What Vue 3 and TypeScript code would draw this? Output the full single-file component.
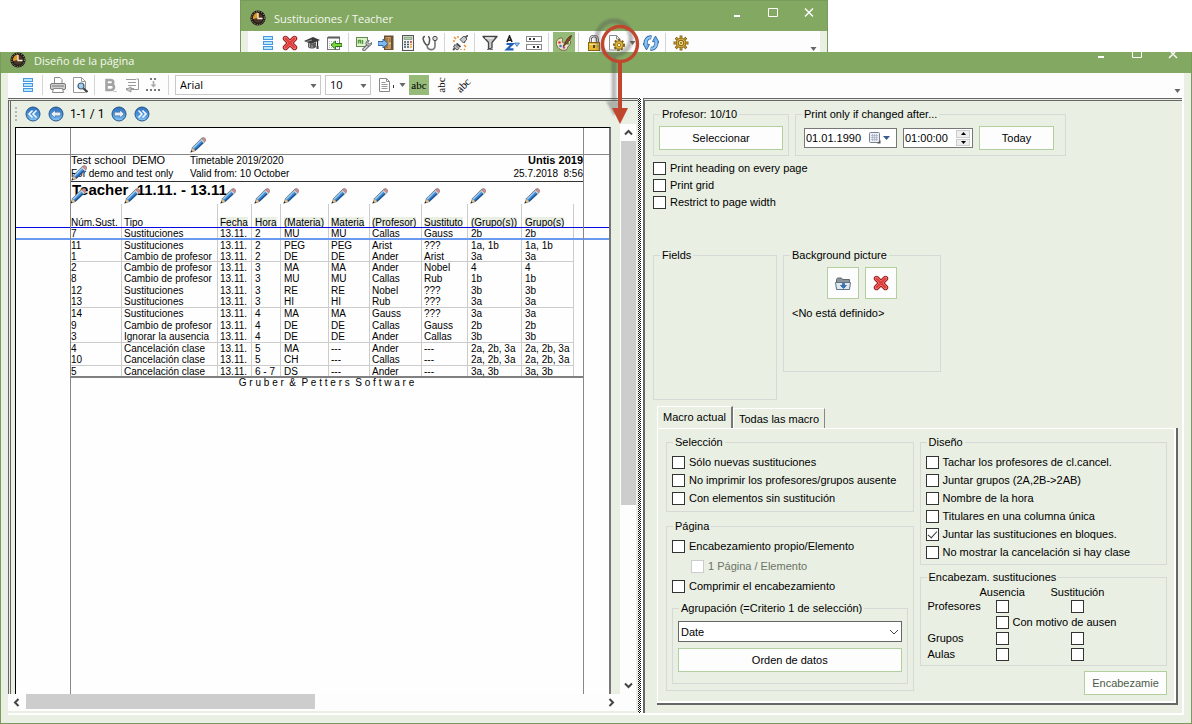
<script setup lang="ts">
import { ref } from 'vue'

interface Tool {
  icon: string
  label: string
  active?: boolean
  menu?: boolean
}

const mainTools: Tool[][] = [
  [
    { icon: 'list', label: 'Lista' },
    { icon: 'cross', label: 'Eliminar' },
    { icon: 'cap', label: 'Profesores' },
    { icon: 'note', label: 'Importar' },
  ],
  [
    { icon: 'chart', label: 'Herramientas' },
    { icon: 'door', label: 'Ausencia' },
    { icon: 'calc', label: 'Contador' },
    { icon: 'steth', label: 'Diagnosis' },
  ],
  [{ icon: 'plug', label: 'Desconectar' }],
  [
    { icon: 'funnel', label: 'Filtro' },
    { icon: 'sort', label: 'Ordenar' },
    { icon: 'boxes', label: 'Columnas' },
  ],
  [{ icon: 'palette', label: 'Colores', active: true }],
  [
    { icon: 'lock', label: 'Bloquear' },
    { icon: 'pagegear', label: 'Vista', menu: true },
    { icon: 'refresh', label: 'Actualizar' },
  ],
  [{ icon: 'gear', label: 'Ajustes' }],
]

const designTools: Tool[][] = [
  [{ icon: 'list', label: 'Lista' }],
  [
    { icon: 'printer', label: 'Imprimir' },
    { icon: 'preview', label: 'Vista previa' },
  ],
  [
    { icon: 'bold', label: 'Negrita' },
    { icon: 'wrap', label: 'Ajustar' },
    { icon: 'spacing', label: 'Separación' },
  ],
]

const columns = [
  { title: 'Núm.Sust.', cls: 'c-num' },
  { title: 'Tipo', cls: 'c-type' },
  { title: 'Fecha', cls: 'c-date' },
  { title: 'Hora', cls: 'c-hour' },
  { title: '(Materia)', cls: 'c-subj' },
  { title: 'Materia', cls: 'c-subj2' },
  { title: '(Profesor)', cls: 'c-teach' },
  { title: 'Sustituto', cls: 'c-subst' },
  { title: '(Grupo(s))', cls: 'c-class' },
  { title: 'Grupo(s)', cls: 'c-class2' },
]

const groups: string[][][] = [
  [['7', 'Sustituciones', '13.11.', '2', 'MU', 'MU', 'Callas', 'Gauss', '2b', '2b']],
  [
    ['11', 'Sustituciones', '13.11.', '2', 'PEG', 'PEG', 'Arist', '???', '1a, 1b', '1a, 1b'],
    ['1', 'Cambio de profesor', '13.11.', '2', 'DE', 'DE', 'Ander', 'Arist', '3a', '3a'],
  ],
  [
    ['2', 'Cambio de profesor', '13.11.', '3', 'MA', 'MA', 'Ander', 'Nobel', '4', '4'],
    ['8', 'Cambio de profesor', '13.11.', '3', 'MU', 'MU', 'Callas', 'Rub', '1b', '1b'],
    ['12', 'Sustituciones', '13.11.', '3', 'RE', 'RE', 'Nobel', '???', '3b', '3b'],
    ['13', 'Sustituciones', '13.11.', '3', 'HI', 'HI', 'Rub', '???', '3a', '3a'],
  ],
  [
    ['14', 'Sustituciones', '13.11.', '4', 'MA', 'MA', 'Gauss', '???', '3a', '3a'],
    ['9', 'Cambio de profesor', '13.11.', '4', 'DE', 'DE', 'Callas', 'Gauss', '2b', '2b'],
    ['3', 'Ignorar la ausencia', '13.11.', '4', 'DE', 'DE', 'Ander', 'Callas', '3b', '3b'],
  ],
  [
    ['4', 'Cancelación clase', '13.11.', '5', 'MA', '---', 'Ander', '---', '2a, 2b, 3a', '2a, 2b, 3a'],
    ['10', 'Cancelación clase', '13.11.', '5', 'CH', '---', 'Callas', '---', '2a, 2b, 3a', '2a, 2b, 3a'],
  ],
  [['5', 'Cancelación clase', '13.11.', '6 - 7', 'DS', '---', 'Ander', '---', '3a, 3b', '3a, 3b']],
]
const tallRows = new Set(['7', '8', '13', '14', '3', '10'])

const printOptions = ref([
  { label: 'Print heading on every page', on: false },
  { label: 'Print grid', on: false },
  { label: 'Restrict to page width', on: false },
])
const selection = ref([
  { label: 'Sólo nuevas sustituciones', on: false },
  { label: 'No imprimir los profesores/grupos ausente', on: false },
  { label: 'Con elementos sin sustitución', on: false },
])
const design = ref([
  { label: 'Tachar los profesores de cl.cancel.', on: false },
  { label: 'Juntar grupos (2A,2B->2AB)', on: false },
  { label: 'Nombre de la hora', on: false },
  { label: 'Titulares en una columna única', on: false },
  { label: 'Juntar las sustituciones en bloques.', on: true },
  { label: 'No mostrar la cancelación si hay clase', on: false },
])
const ownHeading = ref(false)
const onePage = ref(false)
const compress = ref(false)
const startDate = ref('01.01.1990')
const startTime = ref('01:00:00')
const font = ref('Arial')
const fontSize = ref('10')
const grouping = ref('Date')
const publisher = 'G r u b e r  &  P e t t e r s  S o f t w a r e'
</script>

<template>
  <div class="desktop">
    <svg class="defs" aria-hidden="true">
      <defs>
        <linearGradient id="ball" x1="0" y1="0" x2="0" y2="1">
          <stop offset="0" stop-color="#2f6fbd" />
          <stop offset="0.6" stop-color="#4f9be0" />
          <stop offset="1" stop-color="#8ec8f5" />
        </linearGradient>
      </defs>
      <symbol id="i-clock" viewBox="0 0 16 16">
        <circle cx="8" cy="8" r="7.6" fill="#1f1a16" />
        <circle cx="8" cy="8" r="6.4" fill="none" stroke="#b9a894" stroke-width="1" stroke-dasharray="1 1.5" />
        <circle cx="8" cy="8" r="4.8" fill="#4a3626" />
        <path d="M8 8V2.6A5.4 5.4 0 0 0 3 9z" fill="#e09a2c" />
        <path d="M8 3v5.5h4.5" fill="none" stroke="#fff2dc" stroke-width="1.3" />
      </symbol>
      <symbol id="i-list" viewBox="0 0 16 16">
        <g fill="#b5e8fb" stroke="#4a97e0">
          <rect x="3.500" y="1.500" width="9" height="3" />
          <rect x="3.500" y="6.500" width="9" height="3" />
          <rect x="3.500" y="11.500" width="9" height="3" />
        </g>
      </symbol>
      <symbol id="i-cross" viewBox="0 0 16 16">
        <path d="M3.500 3.500l9 9M12.500 3.500l-9 9" stroke="#8e1a1c" stroke-width="5.400" stroke-linecap="round" />
        <path d="M3.500 3.500l9 9M12.500 3.500l-9 9" stroke="#f08078" stroke-width="3.600" stroke-linecap="round" />
        <path d="M3.700 3.700l8.600 8.600M12.300 3.700l-8.600 8.600" stroke="#e23b3b" stroke-width="2.200" stroke-linecap="round" />
      </symbol>
      <symbol id="i-cap" viewBox="0 0 16 16">
        <path d="M0 6l9-4 7 3-9 4z" fill="#3a3a3a" />
        <path d="M4 8v4c2 2 6 2 8 0V7L7 9z" fill="#5c5c5c" />
        <path d="M5.500 9v3M8 10v3" stroke="#aaa" />
        <path d="M2.500 6.500L8 5" stroke="#999" />
        <path d="M13.500 6v7" stroke="#222" stroke-width="1.200" />
        <path d="M12.500 11h2v3h-2z" fill="#444" />
      </symbol>
      <symbol id="i-note" viewBox="0 0 16 16">
        <rect x="1.500" y="2.500" width="12" height="12" fill="#fafafa" stroke="#777" />
        <path d="M3 1v3M5 1v3M7 1v3M9 1v3M11 1v3M13 1v3" stroke="#444" stroke-width="0.900" />
        <path d="M3 6.500h9M3 8.500h3M3 10.500h2M3 12.500h9" stroke="#bbb" stroke-dasharray="1 1" />
        <path d="M5 10l4.500-4v2.500H16v3H9.500V14z" fill="#7ed63c" stroke="#1c6a12" stroke-width="0.900" />
      </symbol>
      <symbol id="i-chart" viewBox="0 0 16 16">
        <rect x="0.500" y="2.500" width="11" height="9" fill="#dff0cc" stroke="#5f8c4c" />
        <path d="M2.500 8.500v-3h2v3M6.500 9V5" fill="none" stroke="#4f9a3a" stroke-width="1.400" />
        <path d="M8 14.500l4.200-4.200" stroke="#555" stroke-width="3.400" stroke-linecap="round" />
        <path d="M8 14.500l4.200-4.200" stroke="#c9ccd0" stroke-width="1.800" stroke-linecap="round" />
        <path d="M15.500 7.500l-2 1.500-1.500-1.500L13.200 5.500c-2-.5-4 1.500-3 3.800s4 2.200 5.200.2z" fill="#b6babf" stroke="#555" stroke-width="0.800" />
      </symbol>
      <symbol id="i-door" viewBox="0 0 16 16">
        <rect x="6" y="0.500" width="9.500" height="14.500" fill="#6b5134" />
        <path d="M7.500 2h5.500v12H7.500z" fill="#c79b62" />
        <path d="M8 3h2v4H8zM11 3h1.500v4H11zM8 9h2v4H8z" fill="#a5784a" />
        <circle cx="12" cy="8.500" r="0.800" fill="#ffe06b" />
        <path d="M0 6.500h5V4l5 4.500-5 4.500v-2.500H0z" fill="#7db9ee" stroke="#2b5f9a" stroke-width="0.900" />
      </symbol>
      <symbol id="i-calc" viewBox="0 0 16 16">
        <rect x="2.500" y="0.500" width="11" height="15" fill="#f4f4f4" stroke="#555" />
        <rect x="4" y="2" width="8" height="2.500" fill="#a9d69b" stroke="#667" stroke-width="0.500" />
        <path d="M4 7h2M4 9.500h2M4 12h2M7 7h2M7 9.500h2M7 12h2" stroke="#456" stroke-width="1.300" />
        <path d="M10 7h2" stroke="#c33" stroke-width="1.300" />
        <path d="M10 9.500h2M10 12h2" stroke="#e3a52b" stroke-width="1.300" />
      </symbol>
      <symbol id="i-steth" viewBox="0 0 16 16">
        <path d="M3 1.500C0 1.500 1 6 3.500 9c1 1.500 3 1.500 3.500-.5C8 5 8 2 6 1.500" fill="none" stroke="#555" stroke-width="1.500" />
        <path d="M5 10c0 6 8 6 8 1V5" fill="none" stroke="#777" stroke-width="1.600" />
        <circle cx="13" cy="3.500" r="2.200" fill="#ddd" stroke="#444" />
      </symbol>
      <symbol id="i-plug" viewBox="0 0 16 16">
        <path d="M1 15l3-3" stroke="#555" stroke-width="1.800" />
        <path d="M3 9.500l4 4-2 1.500-3.500-3z" fill="#bbb" stroke="#555" />
        <path d="M4.500 8.500l4 3.500M9 4l4 3.500" stroke="#444" stroke-width="1.800" />
        <path d="M8 4.500L12 1l3 3-3.500 4z" fill="#c9c9c9" stroke="#555" />
        <path d="M13.500 2.500L16 0" stroke="#555" stroke-width="1.800" />
        <path d="M2 2l2 2M6 1v2M1 6h2M14 12l-2-2M13 15l-1-1M9 14v1" stroke="#f08a24" stroke-width="1.400" />
      </symbol>
      <symbol id="i-funnel" viewBox="0 0 16 16">
        <path d="M1 1.500h14L10 7.500V13l-3.500 1V7.500z" fill="#c7c9cb" stroke="#444" stroke-width="1.300" stroke-linejoin="round" />
        <path d="M3 3h9" stroke="#fff" />
        <path d="M5 14.500h6" stroke="#777" />
      </symbol>
      <symbol id="i-sort" viewBox="0 0 16 16">
        <path d="M3 7L5.500 1 8 7M4 5.200h3" fill="none" stroke="#222" stroke-width="1.600" />
        <path d="M2.500 9h6L3 14.300H9.500" fill="none" stroke="#1f5fb8" stroke-width="2.200" />
        <path d="M10.500 8h5L13 11.500z" fill="#8fc3f0" stroke="#3a77b8" stroke-width="0.800" />
      </symbol>
      <symbol id="i-boxes" viewBox="0 0 16 16">
        <g fill="#fff" stroke="#888">
          <rect x="0.500" y="1.500" width="15" height="5" />
          <rect x="0.500" y="9.500" width="15" height="5" />
        </g>
        <path d="M3 3l2 2M5 3l-2 2M7 3l2 2M9 3l-2 2M11 11l2 2M13 11l-2 2M7 11l2 2M9 11l-2 2" stroke="#222" stroke-width="0.900" />
      </symbol>
      <symbol id="i-palette" viewBox="0 0 16 16">
        <path d="M5 3C2 3-1 7 1 11s6 5 9 4c2-.8 1-2.500 2-3.500S15 10 14.500 7 12 5 11 6 7 9 6.500 7 8 3 5 3z" fill="#efe3c4" stroke="#6b5a3a" stroke-width="0.900" />
        <circle cx="3.500" cy="7.500" r="1.300" fill="#d03c3c" />
        <circle cx="12" cy="8.500" r="1.200" fill="#4c9a4c" />
        <circle cx="4.500" cy="11" r="1.300" fill="#3f78c9" />
        <circle cx="8" cy="12.500" r="1.200" fill="#b04ab0" />
        <path d="M15.500.5c-3 1-5 4-6 6.500l-2.500 4.500 4-3C13 6 15 3.500 15.500.5z" fill="#8b4a2b" stroke="#402010" stroke-width="0.700" />
      </symbol>
      <symbol id="i-lock" viewBox="0 0 16 16">
        <path d="M4.500 8V4.500a3.500 3.500 0 0 1 7 0V8" fill="none" stroke="#444" stroke-width="2.600" />
        <path d="M4.500 8V4.500a3.500 3.500 0 0 1 7 0V8" fill="none" stroke="#e4e4e4" stroke-width="1.100" />
        <rect x="2.500" y="7.500" width="11" height="8" fill="#e7b92e" stroke="#8a6410" />
        <path d="M3.500 9.500h9" stroke="#fbe696" />
        <path d="M8 10v3" stroke="#4b3608" stroke-width="1.800" />
      </symbol>
      <symbol id="i-pagegear" viewBox="0 0 16 16">
        <path d="M0.500 0.500h7l3.500 3.500v11H0.500z" fill="#fff" stroke="#8a8a8a" />
        <path d="M7.500 0.500v3.500H11" fill="none" stroke="#8a8a8a" />
        <circle cx="10" cy="10" r="4.900" fill="none" stroke="#7d5f14" stroke-width="2.200" stroke-dasharray="2 1.600" />
        <circle cx="10" cy="10" r="4.200" fill="#e0b53c" stroke="#8a6814" />
        <circle cx="10" cy="10" r="1.700" fill="#fff3c8" stroke="#8a6814" stroke-width="0.800" />
      </symbol>
      <symbol id="i-refresh" viewBox="0 0 16 16">
        <path d="M8.500 2.500C4.500 1.500 1.500 6 3 10.500M7.500 13.500c4 1 7-3.500 5.500-8" fill="none" stroke="#2c67a6" stroke-width="4" />
        <path d="M0 8.500l6.500 1L3.500 15zM16 7.500l-6.500-1L12.500 1z" fill="#6fb0ea" stroke="#2c67a6" stroke-width="0.900" />
        <path d="M8.500 2.500C4.500 1.500 1.500 6 3 10.500M7.500 13.500c4 1 7-3.500 5.500-8" fill="none" stroke="#8cc4f2" stroke-width="2.300" />
      </symbol>
      <symbol id="i-gear" viewBox="0 0 16 16">
        <path d="M8 .5v15M.5 8h15M2.700 2.700l10.600 10.600M13.300 2.700L2.700 13.300" stroke="#7d5f14" stroke-width="2.800" />
        <path d="M8 1.500v13M1.500 8h13M3.400 3.400l9.200 9.200M12.600 3.400l-9.200 9.200" stroke="#d9ad3a" stroke-width="1.300" />
        <circle cx="8" cy="8" r="4.800" fill="#dfb443" stroke="#7d5f14" stroke-width="0.800" />
        <circle cx="8" cy="8" r="2.800" fill="#f3d983" stroke="#7d5f14" />
        <circle cx="8" cy="8" r="0.900" fill="#7d5f14" />
      </symbol>
      <symbol id="i-printer" viewBox="0 0 16 16">
        <path d="M4.500 7V.5h5.500l2 2V7" fill="#fff" stroke="#888" />
        <rect x="0.500" y="6.500" width="15" height="6" rx="1.500" fill="#cfcfcf" stroke="#777" />
        <path d="M2 9h12" stroke="#777" />
        <path d="M3.500 11.500h9l1 4h-11z" fill="#fff" stroke="#888" />
      </symbol>
      <symbol id="i-preview" viewBox="0 0 16 16">
        <path d="M1.500 .5h8l4 4v11h-12z" fill="#fff" stroke="#999" />
        <path d="M9.500 .5v4h4" fill="none" stroke="#999" />
        <circle cx="9" cy="9" r="3" fill="#9fd0ee" stroke="#4a5a70" stroke-width="1.200" />
        <path d="M11.500 11.500l4 3.500" stroke="#444" stroke-width="2.200" />
      </symbol>
      <symbol id="i-bold" viewBox="0 0 16 16">
        <path d="M4.500 3h4.200c3.400 0 3.400 4.600 0 4.600H4.500h4.600c3.800 0 3.800 5.400 0 5.400H4.500z" fill="none" stroke="#a3a3a3" stroke-width="2.600" />
        <path d="M11 14.500h4" stroke="#ccc" />
      </symbol>
      <symbol id="i-wrap" viewBox="0 0 16 16">
        <path d="M2 2.500h10M4 5.500h8M4 8.500h8M2 11.500h8" stroke="#999" stroke-width="1.200" />
        <path d="M12.500 2h2v10.500H7" fill="none" stroke="#999" />
        <path d="M7 10v5l-5-2.500z" fill="#ccc" stroke="#999" />
      </symbol>
      <symbol id="i-spacing" viewBox="0 0 16 16">
        <path d="M4 1l2 2M6 1L4 3M8 1l2 2M10 1L8 3M0 12l2 2M2 12l-2 2M4 12l2 2M6 12l-2 2M8 12l2 2M10 12l-2 2M12 12l2 2M14 12l-2 2" stroke="#777" />
        <path d="M7.500 4v4" stroke="#aaa" stroke-width="1.600" />
        <path d="M4.500 7.500h6l-3 3z" fill="#aaa" />
      </symbol>
      <symbol id="i-doc" viewBox="0 0 16 16">
        <path d="M1.500 1.500h7l3 3v10h-10z" fill="#fff" stroke="#888" />
        <path d="M8.500 1.500v3h3" fill="none" stroke="#888" />
        <path d="M3.500 5.500h4M3.500 7.500h6M3.500 9.500h6M3.500 11.500h6" stroke="#999" />
        <path d="M15.500 8v3" stroke="#333" />
      </symbol>
      <symbol id="i-pencil" viewBox="0 0 16 16">
        <path d="M0.500 15.500L2 10.500 11.500 1q2-1.500 4 .5 1 2-.5 3.500L5.500 14z" fill="#6f757c" />
        <path d="M2.500 11L10.500 3l3 3-8 7.500z" fill="#3f8fda" />
        <path d="M3.200 11.200L11 3.400" stroke="#a8d4f6" stroke-width="1.200" />
        <path d="M4.800 13.300L13 5.600" stroke="#1d4f8c" stroke-width="1.200" />
        <path d="M10.500 3l1.200-1.200 3.200 3.100L13.500 6z" fill="#c9ced3" />
        <path d="M11.700 1.800q2-1.500 3.300-.3t0 3.300z" fill="#d98a86" />
        <path d="M1 15l1.500-4 3 2.500z" fill="#e3bd8a" />
        <path d="M.5 15.500l.8-2.200 1.300 1.400z" fill="#222" />
      </symbol>
      <symbol id="i-folder" viewBox="0 0 16 16">
        <path d="M1.500 4.500l1-1.500h4l1 1.500h7v9h-13z" fill="#8d959c" stroke="#5f6870" />
        <path d="M.5 7.500h15l-1 7h-13z" fill="#e2eaf1" stroke="#5f7386" />
        <path d="M7.500 8.500h2v2h2l-3 3-3-3h2z" fill="#3276bd" stroke="#1c4c80" stroke-width="0.600" />
      </symbol>
      <symbol id="i-calendar" viewBox="0 0 12 12">
        <rect x="0.500" y="0.500" width="10" height="10" rx="1" fill="#eceff5" stroke="#7b828c" />
        <path d="M2 3.500h7M2 5.500h7M2 7.500h7M3.500 2v7M5.500 2v7M7.500 2v7" stroke="#a5aec0" stroke-width="0.700" />
        <path d="M8 11.500L11.500 8v3.500z" fill="#555" />
      </symbol>
      <symbol id="i-first" viewBox="0 0 16 16">
        <circle cx="8" cy="8" r="7" fill="url(#ball)" stroke="#2a5688" />
        <path d="M7.500 4.500L4 8l3.500 3.500M11.500 4.500L8 8l3.500 3.500" fill="none" stroke="#fff" stroke-width="1.500" />
      </symbol>
      <symbol id="i-prev" viewBox="0 0 16 16">
        <circle cx="8" cy="8" r="7" fill="url(#ball)" stroke="#2a5688" />
        <path d="M3 8l4-4v2.200h5.500v3.600H7V12z" fill="#e8eef5" stroke="#41658e" stroke-width="0.500" />
      </symbol>
      <symbol id="i-next" viewBox="0 0 16 16">
        <circle cx="8" cy="8" r="7" fill="url(#ball)" stroke="#2a5688" />
        <path d="M13 8L9 4v2.200H3.500v3.600H9V12z" fill="#e8eef5" stroke="#41658e" stroke-width="0.500" />
      </symbol>
      <symbol id="i-last" viewBox="0 0 16 16">
        <circle cx="8" cy="8" r="7" fill="url(#ball)" stroke="#2a5688" />
        <path d="M8.500 4.500L12 8l-3.500 3.500M4.500 4.500L8 8l-3.500 3.500" fill="none" stroke="#fff" stroke-width="1.500" />
      </symbol>
      <symbol id="i-down" viewBox="0 0 7 4"><path d="M.5 0h6L3.500 4z" fill="#666" /></symbol>
    </svg>

    <div class="behind">
      <section class="window main-window">
        <header class="titlebar">
          <svg class="ico"><use href="#i-clock" /></svg>
          <h1>Sustituciones / Teacher</h1>
          <div class="winbtns">
            <button type="button" aria-label="Minimizar"><svg width="10" height="12"><path d="M2 10h6" stroke="#fff" stroke-width="2" /></svg></button>
            <button type="button" aria-label="Maximizar"><svg width="10" height="12"><path d="M.5 2.500h9v8h-9z" fill="none" stroke="#fff" /></svg></button>
            <button type="button" aria-label="Cerrar"><svg width="10" height="12"><path d="M1 2.500l8 8M9 2.500l-8 8" stroke="#fff" stroke-width="1.400" /></svg></button>
          </div>
        </header>
        <div class="toolbar">
          <div v-for="(g, gi) in mainTools" :key="gi" class="group">
            <button v-for="t in g" :key="t.icon" type="button" class="tool" :class="{ active: t.active, menu: t.menu }" :aria-label="t.label">
              <svg class="ico"><use :href="'#i-' + t.icon" /></svg>
              <svg v-if="t.menu" class="down"><use href="#i-down" /></svg>
            </button>
          </div>
          <button type="button" class="overflow" aria-label="Más"><svg class="down"><use href="#i-down" /></svg></button>
        </div>
      </section>
    </div>

    <section class="window front">
      <header class="titlebar">
        <svg class="ico"><use href="#i-clock" /></svg>
        <h2>Diseño de la página</h2>
        <div class="winbtns">
          <button type="button" aria-label="Minimizar"><svg width="10" height="7"><path d="M2 5h6" stroke="#fff" stroke-width="2" /></svg></button>
          <button type="button" aria-label="Maximizar"><svg width="10" height="7"><path d="M.5 0v5.500h9V0" fill="none" stroke="#fff" /></svg></button>
          <button type="button" aria-label="Cerrar"><svg width="10" height="7"><path d="M5 2l4 4M5 2l-4 4M5 2l2-2M5 2L3 0" stroke="#fff" stroke-width="1.400" /></svg></button>
        </div>
      </header>

      <div class="toolbar">
        <div v-for="(g, gi) in designTools" :key="gi" class="group">
          <button v-for="t in g" :key="t.icon" type="button" class="tool" :aria-label="t.label">
            <svg class="ico"><use :href="'#i-' + t.icon" /></svg>
          </button>
        </div>
        <div class="group textgroup">
          <span class="combo wide">
            <select v-model="font" aria-label="Fuente"><option>Arial</option></select>
            <svg class="down"><use href="#i-down" /></svg>
          </span>
          <span class="combo">
            <select v-model="fontSize" aria-label="Tamaño"><option>10</option></select>
            <svg class="down"><use href="#i-down" /></svg>
          </span>
          <button type="button" class="tool doc" aria-label="Página">
            <svg class="ico"><use href="#i-doc" /></svg>
            <svg class="down"><use href="#i-down" /></svg>
          </button>
          <button type="button" class="abc active"><span>abc</span></button>
          <button type="button" class="abc"><span class="up">abc</span></button>
          <button type="button" class="abc"><span class="slant">abc</span></button>
        </div>
        <button type="button" class="overflow" aria-label="Más"><svg class="down"><use href="#i-down" /></svg></button>
      </div>

      <div class="body">
        <div class="left">
          <div class="viewer">
            <div class="paper-col">
              <nav class="pager">
                <i class="grip"></i>
                <button type="button" aria-label="Primera"><svg class="ico"><use href="#i-first" /></svg></button>
                <button type="button" aria-label="Anterior"><svg class="ico"><use href="#i-prev" /></svg></button>
                <span>1-1 / 1</span>
                <button type="button" aria-label="Siguiente"><svg class="ico"><use href="#i-next" /></svg></button>
                <button type="button" aria-label="Última"><svg class="ico"><use href="#i-last" /></svg></button>
              </nav>
              <article class="page">
                <div class="topmargin"></div>
                <div class="sheet">
                  <div class="letterhead">
                    <div class="lh-school big">Test school&nbsp; DEMO</div>
                    <div class="lh-mid">Timetable 2019/2020<svg class="pencil above"><use href="#i-pencil" /></svg></div>
                    <div class="lh-right big"><b>Untis 2019</b></div>
                    <div class="lh-school">For demo and test only<svg class="pencil start"><use href="#i-pencil" /></svg></div>
                    <div class="lh-mid">Valid from: 10 October</div>
                    <div class="lh-right">25.7.2018&nbsp; 8:56</div>
                  </div>
                  <h3>Teacher&nbsp; 11.11. - 13.11.</h3>
                  <table>
                    <thead>
                      <tr>
                        <th v-for="c in columns" :key="c.cls" :class="c.cls" scope="col">
                          <span>{{ c.title }}</span>
                          <svg class="pencil head"><use href="#i-pencil" /></svg>
                        </th>
                      </tr>
                    </thead>
                    <tbody v-for="(g, gi) in groups" :key="gi">
                      <tr v-for="r in g" :key="r[0]" :class="{ tall: tallRows.has(r[0]) }">
                        <td v-for="(v, vi) in r" :key="vi">{{ v }}</td>
                      </tr>
                    </tbody>
                  </table>
                  <footer>{{ publisher }}</footer>
                </div>
                <i class="rule first"></i>
                <i class="rule second"></i>
                <i class="guide gl"></i>
                <i class="guide gr"></i>
              </article>
            </div>
            <div class="vscroll">
              <button type="button" aria-label="Arriba"><svg width="9" height="7"><path d="M1 5.500L4.500 2 8 5.500" fill="none" stroke="#444" stroke-width="2" /></svg></button>
              <div class="track"><div class="thumb"></div></div>
              <button type="button" aria-label="Abajo"><svg width="9" height="7"><path d="M1 1.500L4.500 5 8 1.500" fill="none" stroke="#444" stroke-width="2" /></svg></button>
            </div>
          </div>
          <div class="hscroll">
            <button type="button" aria-label="Izquierda"><svg width="7" height="9"><path d="M5.500 1L2 4.500 5.500 8" fill="none" stroke="#444" stroke-width="2" /></svg></button>
            <div class="track"><div class="thumb"></div></div>
            <button type="button" aria-label="Derecha"><svg width="7" height="9"><path d="M1.500 1L5 4.500 1.500 8" fill="none" stroke="#444" stroke-width="2" /></svg></button>
          </div>
        </div>
        <div class="splitter"></div>

        <div class="right">
          <div class="line">
            <fieldset class="prof">
              <legend>Profesor: 10/10</legend>
              <button type="button" class="btn">Seleccionar</button>
            </fieldset>
            <fieldset class="changed">
              <legend>Print only if changed after...</legend>
              <div class="line changed-row">
                <span class="field date">
                  <input v-model="startDate" type="text" aria-label="Fecha" />
                  <button type="button" aria-label="Calendario">
                    <svg width="12" height="12"><use href="#i-calendar" /></svg>
                    <svg width="7" height="4"><path d="M0 0h7L3.500 4z" fill="#3c5a8c" /></svg>
                  </button>
                </span>
                <span class="field time">
                  <input v-model="startTime" type="text" aria-label="Hora" />
                  <span class="spin">
                    <button type="button" aria-label="Más"><svg width="5" height="3"><path d="M0 3h5L2.500 0z" /></svg></button>
                    <button type="button" aria-label="Menos"><svg width="5" height="3"><path d="M0 0h5L2.500 3z" /></svg></button>
                  </span>
                </span>
                <button type="button" class="btn today">Today</button>
              </div>
            </fieldset>
          </div>

          <div class="checks printopts">
            <label v-for="o in printOptions" :key="o.label"><input v-model="o.on" type="checkbox" />{{ o.label }}</label>
          </div>

          <div class="line pictures">
            <fieldset class="fields"><legend>Fields</legend></fieldset>
            <fieldset class="bgpic">
              <legend>Background picture</legend>
              <div class="line picbtns">
                <button type="button" class="btn" aria-label="Abrir"><svg class="ico"><use href="#i-folder" /></svg></button>
                <button type="button" class="btn" aria-label="Eliminar"><svg class="ico"><use href="#i-cross" /></svg></button>
              </div>
              <p>&lt;No está definido&gt;</p>
            </fieldset>
          </div>

          <div class="tabs" role="tablist">
            <button type="button" role="tab" aria-selected="true" class="tab on">Macro actual</button>
            <button type="button" role="tab" aria-selected="false" class="tab">Todas las macro</button>
          </div>
          <div class="tabpanel">
            <div class="col">
              <fieldset>
                <legend>Selección</legend>
                <div class="checks c-sel">
                  <label v-for="o in selection" :key="o.label"><input v-model="o.on" type="checkbox" />{{ o.label }}</label>
                </div>
              </fieldset>
              <fieldset class="pagina">
                <legend>Página</legend>
                <div class="checks c-page">
                  <label><input v-model="ownHeading" type="checkbox" />Encabezamiento propio/Elemento</label>
                  <label class="disabled"><input v-model="onePage" type="checkbox" disabled />1 Página / Elemento</label>
                  <label><input v-model="compress" type="checkbox" />Comprimir el encabezamiento</label>
                </div>
                <fieldset class="grouping">
                  <legend>Agrupación (=Criterio 1 de selección)</legend>
                  <span class="bigselect">
                    <select v-model="grouping" aria-label="Agrupación"><option>Date</option></select>
                    <svg width="10" height="6"><path d="M1 1l4 4 4-4" fill="none" stroke="#444" /></svg>
                  </span>
                  <button type="button" class="btn">Orden de datos</button>
                </fieldset>
              </fieldset>
            </div>
            <div class="col">
              <fieldset>
                <legend>Diseño</legend>
                <div class="checks c-design">
                  <label v-for="o in design" :key="o.label"><input v-model="o.on" type="checkbox" />{{ o.label }}</label>
                </div>
              </fieldset>
              <fieldset class="headings">
                <legend>Encabezam. sustituciones</legend>
                <div class="matrix">
                  <span></span><span class="mh">Ausencia</span><span class="mh subst">Sustitución</span>
                  <span>Profesores</span>
                  <input type="checkbox" aria-label="Profesores, ausencia" />
                  <input type="checkbox" aria-label="Profesores, sustitución" />
                  <span></span>
                  <label class="reason"><input type="checkbox" />Con motivo de ausen</label>
                  <span>Grupos</span>
                  <input type="checkbox" aria-label="Grupos, ausencia" />
                  <input type="checkbox" aria-label="Grupos, sustitución" />
                  <span>Aulas</span>
                  <input type="checkbox" aria-label="Aulas, ausencia" />
                  <input type="checkbox" aria-label="Aulas, sustitución" />
                </div>
              </fieldset>
              <button type="button" class="btn headbtn">Encabezamie</button>
            </div>
          </div>
        </div>
      </div>
    </section>

    <svg class="callout" width="56" height="116" viewBox="0 0 56 116" aria-hidden="true">
      <g class="shade" fill="none" stroke="#555">
        <circle cx="24" cy="25" r="17" stroke-width="5" />
        <path d="M24 43v46" stroke-width="5" />
        <path d="M16 88h16l-8 15z" fill="#555" stroke="none" />
      </g>
      <circle cx="30" cy="31" r="17.500" fill="none" stroke="#c0462e" stroke-width="3.400" />
      <path d="M30 48v48" stroke="#c0462e" stroke-width="4" />
      <path d="M22 95h16l-8 16z" fill="#c0462e" />
    </svg>
  </div>
</template>

<style>
html,
body,
#app {
  height: 100%;
}
</style>

<style scoped>
.desktop {
  position: relative;
  display: flex;
  flex-direction: column;
  min-height: 100%;
  background: #fff;
  color: #000;
  font: 11px/16px 'Liberation Sans', Arial, sans-serif;
}
.desktop *,
.desktop *::before {
  box-sizing: border-box;
}
.defs {
  position: absolute;
  width: 0;
  height: 0;
}
button {
  font: inherit;
  color: inherit;
  margin: 0;
  padding: 0;
  border: 0;
  background: none;
}
svg {
  flex: none;
  display: block;
}
.ico,
.pencil {
  width: 16px;
  height: 16px;
}
.down {
  width: 7px;
  height: 4px;
}

/* windows */
.behind {
  height: 52px;
  overflow: hidden;
}
.window {
  background: #e9efe3;
  border: 1px solid #7a9a5c;
}
.main-window {
  width: 588px;
  margin-left: 240px;
}
.titlebar {
  display: flex;
  align-items: center;
  height: 30px;
  padding: 0 9px;
  background: #83a862;
  color: #f4f8ef;
}
.titlebar h1,
.titlebar h2 {
  flex: 1;
  margin: 0 0 0 8px;
  font: 11px/16px 'Open Sans', 'Noto Sans', sans-serif;
}
.main-window .titlebar {
  padding-top: 4px;
}
.main-window h1 {
  padding-top: 2px;
}
.winbtns {
  display: flex;
  align-self: flex-start;
  gap: 26px;
  margin: 1px 4px 0 0;
}
.front .winbtns {
  margin-top: 0;
}
.toolbar {
  display: flex;
  align-items: center;
  height: 25px;
  margin: 0 7px;
  padding: 0 0 2px 9px;
  background: #fdfdfd;
}
.group {
  display: flex;
  align-items: center;
}
.group + .group::before {
  content: '';
  width: 1px;
  height: 20px;
  margin: 0 4px 0 3px;
  background: #d4d4d4;
}
.tool {
  display: flex;
  align-items: center;
  justify-content: center;
  width: 22px;
  height: 22px;
}
.active {
  background: #96bb78;
}
.menu {
  width: 35px;
  gap: 4px;
}
.overflow {
  align-self: flex-end;
  margin: 0 3px 3px auto;
}

.front {
  flex: 1;
  display: flex;
  flex-direction: column;
  border-top: 0;
  padding-bottom: 8px;
}
.front .titlebar {
  align-items: flex-start;
  height: 21px;
}
.front .titlebar h2 {
  margin-top: 1px;
}
.textgroup {
  font: 11px/16px 'Open Sans', 'Noto Sans', sans-serif;
}
.combo {
  position: relative;
  width: 46px;
  margin: 0 4px 0 0;
}
.combo.wide {
  width: 146px;
  margin-left: 2px;
}
.combo select {
  appearance: none;
  display: block;
  width: 100%;
  height: 20px;
  padding: 0 4px;
  border: 1px solid #c8c8c8;
  border-radius: 0;
  background: #fff;
  color: #000;
  font: inherit;
}
.combo .down {
  position: absolute;
  right: 4px;
  top: 9px;
}
.tool.doc {
  width: 34px;
  gap: 5px;
}
.abc {
  width: 20px;
  height: 20px;
  margin-right: 2px;
  font: 11px/16px 'Liberation Serif', serif;
}
.abc span {
  display: block;
}
.abc .up {
  transform: rotate(-90deg);
}
.abc .slant {
  transform: rotate(-45deg);
}

.body {
  flex: 1;
  display: grid;
  grid-template-columns: 630fr 5px 539fr;
  margin: 0 7px;
  border-right: 2px solid #fff;
  border-bottom: 2px solid #fff;
}
.left,
.right {
  border-top: 3px double #666;
}
.left {
  display: flex;
  flex-direction: column;
  min-width: 0;
}
.viewer {
  flex: 1;
  display: flex;
  border-left: 3px double #666;
}
.paper-col {
  flex: 1;
  display: flex;
  flex-direction: column;
  min-width: 0;
  padding: 0 9px 0 4px;
}
.pager {
  display: flex;
  align-items: center;
  height: 26px;
  font: 12px/16px Roboto, sans-serif;
}
.pager span {
  margin: 0 7px 0 6px;
}
.pager button + button {
  margin-left: 7px;
}
.grip {
  width: 2px;
  height: 14px;
  margin: 0 8px 0 0;
  background: repeating-linear-gradient(#b5b5b5 0 2px, transparent 2px 4px);
}
.page {
  position: relative;
  flex: 1;
  background: #fefefe;
  border: 1px solid #000;
  border-right: 2px solid #777;
  border-bottom: 0;
  font: 10px/11px 'Liberation Sans', Arial, sans-serif;
}
.topmargin {
  height: 27px;
  border-bottom: 1px solid #888;
}
.sheet {
  margin: 0 26px 0 54px;
}
.letterhead {
  display: grid;
  grid-template-columns: 119px 1fr auto;
  grid-template-rows: 11px 15px;
  align-items: center;
  padding-left: 1px;
  border-bottom: 1px solid #333;
  white-space: nowrap;
}
.letterhead div {
  position: relative;
}
.lh-right {
  text-align: right;
}
.big {
  font-size: 11px;
}
.pencil {
  position: absolute;
}
.pencil.above {
  left: 0;
  bottom: 13px;
}
.pencil.start {
  left: 0;
  top: -3px;
}
.pencil.head {
  left: 2px;
  top: -16px;
}
h3 {
  height: 22px;
  margin: 0;
  padding-left: 2px;
  font: bold 15px/16px 'Liberation Sans', Arial, sans-serif;
}
table {
  table-layout: fixed;
  width: 504px;
  border-spacing: 0;
}
th {
  position: relative;
  height: 23px;
  padding: 0 0 0 2px;
  border-right: 1px solid #ccc;
  font-weight: normal;
  line-height: 9px;
  text-align: left;
  vertical-align: bottom;
  white-space: nowrap;
}
th:nth-child(n + 3) span {
  background: #e9efe3;
}
.c-num { width: 52px; }
.c-type { width: 96px; }
.c-date { width: 34px; }
.c-hour { width: 29px; }
.c-subj { width: 48px; }
.c-subj2 { width: 41px; }
.c-teach { width: 52px; }
.c-subst { width: 46px; }
.c-class { width: 54px; }
.c-class2 { width: 52px; }
td {
  height: 11px;
  padding: 2px 0 0 2px;
  border-right: 1px solid #ccc;
  line-height: 9px;
  vertical-align: top;
  white-space: nowrap;
}
th:nth-child(4),
th:nth-child(5),
th:nth-child(n + 9),
td:nth-child(4),
td:nth-child(5),
td:nth-child(n + 9) {
  padding-left: 3px;
}
th:first-child,
td:first-child {
  padding-left: 1px;
}
th:first-child .pencil {
  left: 0;
}
tbody tr:first-child td {
  padding-top: 1px;
  border-top: 1px solid #ccc;
}
tr.tall td {
  height: 12px;
}
footer {
  border-top: 2px solid #808080;
  line-height: 9px;
  text-align: center;
  white-space: pre;
}
.rule {
  position: absolute;
  left: 0;
  right: 0;
}
.rule.first {
  top: 99px;
  height: 1px;
  background: #0a0ae0;
}
.rule.second {
  top: 110px;
  height: 2px;
  background: #6a9af0;
}
.guide {
  position: absolute;
  top: 0;
  bottom: 0;
  width: 1px;
  background: #888;
}
.gl {
  left: 54px;
}
.gr {
  right: 25px;
}

.vscroll {
  display: flex;
  flex-direction: column;
  width: 16px;
  margin: 23px 2px 0 0;
  background: #fdfdfd;
}
.vscroll button,
.hscroll button {
  display: flex;
  align-items: center;
  justify-content: center;
  width: 17px;
  height: 17px;
}
.track {
  flex: 1;
}
.vscroll .thumb {
  width: 15px;
  height: 68%;
  margin-left: 1px;
  background: #cdcdcd;
}
.hscroll {
  display: flex;
  height: 17px;
  margin: 0 2px 2px 0;
  padding-right: 16px;
  background: #fdfdfd;
}
.hscroll .track {
  display: flex;
}
.hscroll .thumb {
  width: 50%;
  height: 15px;
  margin-left: 1px;
  background: #cdcdcd;
}
.splitter {
  background: repeating-conic-gradient(#111 0 25%, #fff 0 50%) 0 0 / 2px 2px;
  border-right: 2px solid #fff;
}

/* options */
.right {
  min-width: 0;
  padding: 5px 3px 6px 8px;
  border-left: 2px solid #666;
}
.line {
  display: flex;
}
fieldset {
  min-width: 0;
  margin: 0;
  padding: 0 5px;
  border: 1px solid #d7d9d6;
}
legend {
  margin-left: 1px;
  padding: 0 2px;
  white-space: nowrap;
}
.btn {
  height: 24px;
  border: 1px solid #b3cf9f;
  background: #fdfdfd;
}
.prof {
  width: 136px;
  height: 50px;
  margin-right: 6px;
}
.prof .btn {
  width: 100%;
  margin-top: 4px;
}
.prof .btn,
.today {
  display: block;
}
.changed {
  width: 271px;
}
.changed-row {
  align-items: center;
  gap: 6px;
  margin-top: 4px;
  padding-left: 3px;
}
.field {
  display: flex;
  height: 20px;
  border: 1px solid #777;
  background: #fff;
}
.field input {
  flex: 1;
  min-width: 0;
  padding: 0 0 0 1px;
  border: 0;
  outline: 0;
  background: none;
  color: #000;
  font: inherit;
}
.date {
  width: 93px;
}
.date button {
  display: flex;
  align-items: center;
  gap: 2px;
  margin-right: 6px;
}
.time {
  width: 70px;
}
.spin {
  display: flex;
  flex-direction: column;
  gap: 1px;
  width: 14px;
  margin: 1px 2px 1px 0;
}
.spin button {
  flex: 1;
  display: flex;
  align-items: center;
  justify-content: center;
  border: 1px solid #ccc;
  background: #eee;
}
.today {
  width: 75px;
}
.checks {
  display: flex;
  flex-direction: column;
}
.checks label,
.reason {
  display: flex;
  align-items: center;
  gap: 4px;
  white-space: nowrap;
}
input[type='checkbox'] {
  appearance: none;
  flex: none;
  width: 13px;
  height: 13px;
  margin: 0;
  border: 1px solid #333;
  background: #fff;
}
input[type='checkbox']:checked::before {
  content: '';
  display: block;
  width: 9px;
  height: 5px;
  margin: 2px 0 0 1px;
  border: solid #333;
  border-width: 0 0 1px 1px;
  transform: rotate(-48deg);
}
.printopts {
  gap: 1px;
  margin-top: 4px;
}
.pictures {
  gap: 6px;
  align-items: flex-start;
  margin-top: 37px;
}
.fields {
  width: 124px;
  height: 153px;
}
.bgpic {
  width: 158px;
  height: 125px;
}
.picbtns {
  justify-content: center;
  gap: 6px;
  margin-top: 4px;
}
.picbtns .btn {
  display: flex;
  align-items: center;
  justify-content: center;
  width: 32px;
  height: 32px;
}
.bgpic p {
  margin: 6px 0 0 3px;
}
.tabs {
  display: flex;
  align-items: flex-end;
  margin: 6px 0 0 4px;
}
.tab {
  height: 20px;
  padding: 0 5px;
  border: 1px solid #fff;
  border-right-color: #888;
  border-bottom: 0;
}
.tab.on {
  height: 22px;
  padding: 0 5px 2px;
  border-right: 2px solid #777;
}
.tabpanel {
  display: grid;
  grid-template-columns: 1fr 1fr;
  gap: 6px;
  margin: 0 3px 0 4px;
  padding: 5px 7px 6px 8px;
  border: solid #fff;
  border-width: 1px 2px 2px 1px;
  box-shadow: 1px 1px 0 1px #666;
}
.col {
  display: flex;
  flex-direction: column;
  min-width: 0;
}
.c-sel {
  gap: 2px;
  padding: 4px 0 5px;
}
.c-page {
  gap: 4px;
  padding: 4px 0 6px;
}
.disabled {
  margin-left: 19px;
  color: #6b7466;
}
.disabled input {
  border-color: #ccc;
}
.pagina {
  margin-top: 6px;
  padding-bottom: 6px;
}
.grouping {
  padding-bottom: 11px;
}
.bigselect {
  position: relative;
  display: block;
  margin-top: 5px;
}
.bigselect select {
  appearance: none;
  display: block;
  width: 100%;
  height: 21px;
  padding: 0 2px;
  border: 1px solid #666;
  border-radius: 0;
  background: #fff;
  color: #000;
  font: inherit;
}
.bigselect svg {
  position: absolute;
  right: 3px;
  top: 8px;
}
.grouping .btn {
  display: block;
  width: 100%;
  margin-top: 6px;
}
.c-design {
  gap: 2px;
  padding: 4px 0 4px;
}
.headings {
  margin-top: 4px;
}
.matrix {
  display: grid;
  grid-template-columns: 70px 75px 1fr;
  grid-template-rows: 13px 16px 16px 16px 16px;
  align-items: center;
  padding: 0 0 3px;
}
.matrix > span {
  padding-left: 2px;
}
.matrix .mh {
  justify-self: start;
  margin-left: -18px;
  line-height: 10px;
}
.matrix .subst {
  margin-left: -22px;
}
.reason {
  grid-column: 2 / 4;
}
.headbtn {
  align-self: flex-end;
  width: 83px;
  margin-top: 5px;
  color: #4d5b48;
}

.callout {
  position: absolute;
  left: 590px;
  top: 13px;
  pointer-events: none;
}
.shade {
  opacity: 0.4;
  filter: blur(1px);
}
</style>
